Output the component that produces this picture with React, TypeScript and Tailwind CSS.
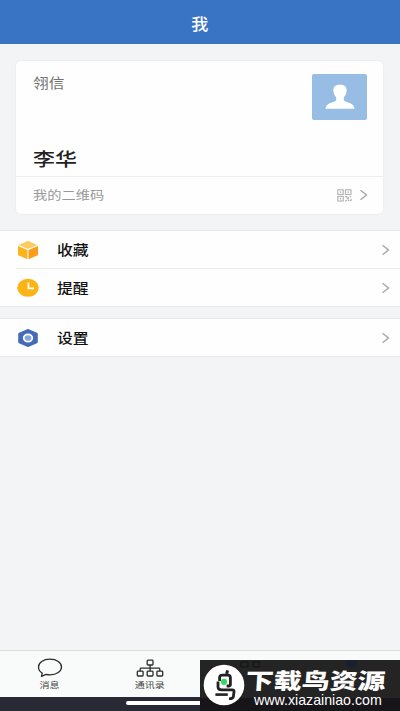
import React from 'react';

const Chevron: React.FC = () => (
  <svg className="w-[9px] h-3 shrink-0" viewBox="0 0 9 12" fill="none" stroke="#a6a6a6" strokeWidth="1.4">
    <path d="M1.5 1.2 7.5 6 1.5 10.8" />
  </svg>
);

const CubeIcon: React.FC = () => (
  <svg className="w-[22px] h-[20px]" viewBox="0 0 22 20">
    <path d="M11 .8 20.3 4.9 11 9 1.7 4.9Z" fill="#fbcb62" />
    <path d="M1 6 10.5 10.1V19.2L1.8 15.6Q1 15.2 1 14.4Z" fill="#fbb31c" />
    <path d="M21 6 11.5 10.1V19.2L20.2 15.6Q21 15.2 21 14.4Z" fill="#f99d1b" />
  </svg>
);

const ClockIcon: React.FC = () => (
  <svg className="w-[22px] h-[20px]" viewBox="0 0 22 20">
    <ellipse cx="11" cy="9.8" rx="10.8" ry="9" fill="#fcb316" />
    <path d="M11.4 4.5V10.4H17" fill="none" stroke="#fff" strokeWidth="1.7" />
  </svg>
);

const SettingsIcon: React.FC = () => (
  <svg className="w-[22px] h-[20px]" viewBox="0 0 22 20">
    <path d="M10.2 1.2Q11 .8 11.8 1.2L20 4.8Q20.8 5.2 20.8 6V14Q20.8 14.8 20 15.2L11.8 18.8Q11 19.2 10.2 18.8L2 15.2Q1.2 14.8 1.2 14V6Q1.2 5.2 2 4.8Z" fill="#456bb8" />
    <ellipse cx="11" cy="10" rx="4.3" ry="3.7" fill="#86a6e0" stroke="#fff" strokeWidth="1.7" />
  </svg>
);

const QrIcon: React.FC = () => (
  <svg className="w-[15px] h-[13px]" viewBox="0 0 15 13" fill="none" stroke="#a9a9a9" strokeWidth="1">
    <rect x=".8" y=".8" width="5.4" height="4.6" />
    <rect x="8.4" y=".8" width="5.6" height="4.6" />
    <rect x=".8" y="7.4" width="5.4" height="4.6" />
    <path d="M2.8 3.1H4.3M10.5 3.1H12M2.8 9.7H4.3" strokeWidth="1.3" />
    <path d="M8 7.6H10V9.4H11.6V8M12.6 7.4H14.2M8 11.8H9.6L10.2 10.6M11.6 10.4V12M12.6 11.6H14.2V9.8" />
  </svg>
);

const MessageIcon: React.FC = () => (
  <svg className="w-[26px] h-5" viewBox="0 0 26 20" fill="none" stroke="#2c2c2c" strokeWidth="1.3" strokeLinejoin="round">
    <path d="M5.2 15C2.7 13.6 1.5 11.6 1.5 9 1.5 4.7 6.2 1.2 13 1.2S24.5 4.7 24.5 9 19.7 16.8 13 16.8C11.6 16.8 10.3 16.6 9.1 16.3L4.5 18.4Z" />
  </svg>
);

const ContactsIcon: React.FC = () => (
  <svg className="w-[28px] h-5" viewBox="0 0 28 20" fill="none" stroke="#2c2c2c" strokeWidth="1.3">
    <rect x="11.2" y="2.2" width="5.8" height="4.8" rx=".8" />
    <rect x="1.3" y="13.2" width="5.8" height="4.8" rx=".8" />
    <rect x="11.2" y="13.2" width="5.8" height="4.8" rx=".8" />
    <rect x="20.9" y="13.2" width="5.8" height="4.8" rx=".8" />
    <path d="M14.1 7V13.2M4.2 13.2V10.9Q4.2 10.1 5.1 10.1H22.9Q23.8 10.1 23.8 10.9V13.2" />
  </svg>
);

const BirdLogo: React.FC = () => (
  <svg className="w-[42px] h-[42px] shrink-0" viewBox="0 0 42 42" fill="none">
    <circle cx="21" cy="21" r="20.3" fill="#fff" />
    <path d="M24.6 6.4 23.6 10" stroke="#222" strokeWidth="3" />
    <path d="M16.6 17V13.8Q16.6 11.2 19.4 11.2H24.8Q27.4 11.2 27.4 13.8V20.6Q27.4 22 25.8 22H23.6" stroke="#222" strokeWidth="2.8" />
    <path d="M15 17.4V23Q15 25.8 18.6 25.8H29.2Q31.2 25.8 31 27.6L30.4 32.6Q29.8 35 26 34.6" stroke="#222" strokeWidth="2.8" />
    <path d="M12.4 30.6H24.8" stroke="#222" strokeWidth="2.6" />
    <circle cx="21" cy="17.8" r="3.1" fill="#2edb65" />
  </svg>
);

const groups = [
  [
    { icon: <CubeIcon />, label: '收藏' },
    { icon: <ClockIcon />, label: '提醒' },
  ],
  [{ icon: <SettingsIcon />, label: '设置' }],
];

const tabs = [
  { icon: <MessageIcon />, label: '消息' },
  { icon: <ContactsIcon />, label: '通讯录' },
];

const App: React.FC = () => {
  return (
    <div className="relative flex flex-col w-[400px] h-[711px] overflow-hidden bg-[#f3f4f6] font-['Noto_Sans_CJK_SC',sans-serif]">
      <header className="h-11 shrink-0 bg-[#3873c4] flex justify-center pt-3">
        <h1 className="text-white text-[15.5px] font-medium leading-[22px] scale-x-110">我</h1>
      </header>

      <section className="ml-4 mr-[17px] mt-[17px] h-[153px] shrink-0 flex flex-col bg-[#fefefe] rounded-[5px] shadow-[0_0_2px_rgba(0,0,0,0.08)]">
        <div className="flex-1 flex justify-between pl-[17px] pr-4 pt-[13px]">
          <div className="flex flex-col items-start -mt-[2px]">
            <span className="text-sm leading-5 text-[#707070] origin-left scale-x-[1.12]">翎信</span>
            <span className="mt-[53px] text-[18px] leading-[26px] font-medium text-[#222] origin-left scale-x-[1.22]">李华</span>
          </div>
          <div className="w-[55px] h-[46px] rounded-[2px] bg-[#97bde4] flex justify-center pt-[10px]">
            <svg className="w-[30px] h-[26px]" viewBox="0 0 30 26" fill="#fff">
              <path d="M15 .8C19.4 .8 21.8 2.6 21.6 6.4 21.5 9.4 20.4 11.6 18.8 13.2V16.4C20.8 18.4 29.3 18.6 29.5 24.8H.5C.7 18.6 9.2 18.4 11.2 16.4V13.2C9.6 11.6 8.5 9.4 8.4 6.4 8.2 2.6 10.6 .8 15 .8Z" />
            </svg>
          </div>
        </div>
        <div className="h-[38px] flex items-center border-t border-[#eceef0] pl-[17px] pr-[15px]">
          <span className="text-[12.5px] text-[#999] origin-left scale-x-[1.14]">我的二维码</span>
          <div className="ml-auto flex items-center gap-[7px] -mt-px">
            <QrIcon />
            <Chevron />
          </div>
        </div>
      </section>

      <div className="mt-4 flex flex-col gap-[11px]">
        {groups.map((group, index) => (
          <ul key={index} className="bg-[#fefefe] border-y border-[#e7e9ec]">
            {group.map((item, itemIndex) => (
              <li key={item.label}>
                {itemIndex > 0 && <div className="ml-4 h-px bg-[#e9edee]"></div>}
                <div className="h-[37px] flex items-center pl-[17px] pr-[10px]">
                  {item.icon}
                  <span className="ml-[18px] mr-auto text-sm leading-5 pb-px font-medium text-[#111] origin-left scale-x-[1.13]">{item.label}</span>
                  <Chevron />
                </div>
              </li>
            ))}
          </ul>
        ))}
      </div>

      <nav className="mt-auto h-[47px] shrink-0 flex bg-[#f9fbfb] border-t border-[#dcdfe0]">
        {tabs.map((tab) => (
          <div key={tab.label} className="w-[100px] flex flex-col items-center pt-[7px]">
            {tab.icon}
            <span className="-mt-px text-[8.5px] leading-[14px] text-[#444] scale-x-[1.18]">{tab.label}</span>
          </div>
        ))}
      </nav>
      <div className="h-[14px] shrink-0 bg-[#292936] flex justify-center pt-1">
        <div className="w-[148px] h-[4px] rounded-full bg-white"></div>
      </div>

      {/* Download site banner over the tab bar */}
      <div className="absolute left-[200px] top-[660px] w-[200px] h-[51px] bg-[#242424] overflow-hidden">
        <div className="absolute inset-x-0 bottom-0 h-[13px] bg-[#17151a]"></div>
        <svg className="absolute left-10 top-0 w-5 h-8" viewBox="0 0 20 32" fill="none" stroke="#111" strokeWidth="1">
          <path d="M1 2H8V7H1ZM13 2H20V7H13Z" />
        </svg>
        <div className="absolute left-[145px] top-0 w-3 h-2 rounded-b-full bg-[#1b2030]"></div>
        <div className="relative flex pl-[3px] pt-1">
          <BirdLogo />
          <div className="flex flex-col items-start pt-[3px]">
            <span className="ml-px whitespace-nowrap text-[22px] leading-[24px] font-black text-white origin-left scale-x-[1.27] -skew-x-3">下载鸟资源</span>
            <span className="ml-[9px] mt-[2px] whitespace-nowrap text-[14.2px] leading-[15px] text-white font-['Liberation_Sans',sans-serif]">www.xiazainiao.com</span>
          </div>
        </div>
      </div>
    </div>
  );
};

export default App;
